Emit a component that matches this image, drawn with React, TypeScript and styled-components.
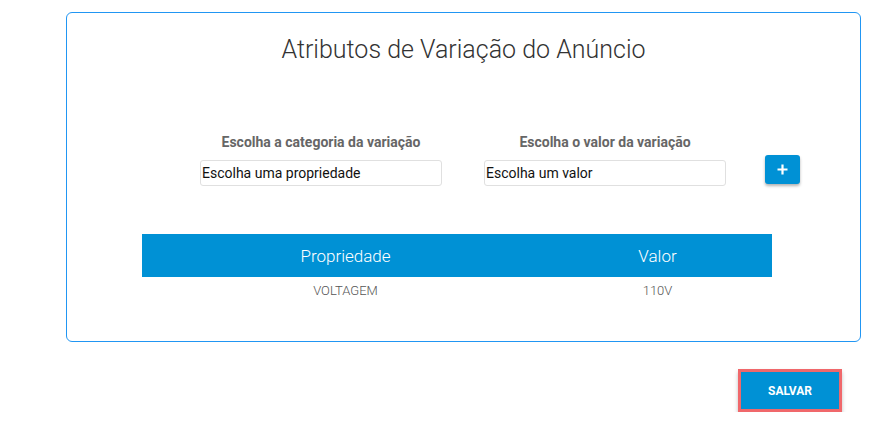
import React from "react";
import styled, { createGlobalStyle } from "styled-components";

const Global = createGlobalStyle`
  html, body { margin: 0; padding: 0; background: #fff; }
  body { font-family: Roboto, "Liberation Sans", Arial, sans-serif; }
  * { box-sizing: border-box; }
`;

const Page = styled.div`
  padding: 12px 0 0 66px;
`;

const Card = styled.section`
  width: 795px;
  height: 330px;
  border: 1px solid #2196f3;
  border-radius: 6px;
  display: flex;
  flex-direction: column;
`;

const Title = styled.h1`
  margin: 21px 0 0;
  text-align: center;
  font-family: Roboto, sans-serif;
  font-weight: 300;
  font-size: 25px;
  line-height: 31px;
  color: #333;
`;

const FormRow = styled.div`
  display: flex;
  align-items: flex-end;
  margin: 69px 0 0 133px;
`;

const Field = styled.div`
  display: flex;
  flex-direction: column;
  width: 242px;
  & + & {
    margin-left: 42px;
  }
`;

const Label = styled.label`
  font-family: Roboto, sans-serif;
  font-weight: 700;
  font-size: 14px;
  line-height: 16px;
  color: #666;
  text-align: center;
  margin-bottom: 10px;
`;

const Input = styled.input`
  width: 242px;
  height: 26px;
  border: 1px solid #e0e0e0;
  border-radius: 3px;
  padding: 1px 1px;
  font-family: Roboto, sans-serif;
  font-size: 14px;
  color: #111;
  background: #fff;
  outline: none;
  &::placeholder {
    color: #111;
    opacity: 1;
  }
`;

const AddButton = styled.button`
  width: 35px;
  height: 29px;
  margin: 0 0 2px 39px;
  border: none;
  border-radius: 3px;
  background: #0091d5;
  box-shadow: 0 2px 3px rgba(0, 0, 0, 0.3);
  display: flex;
  align-items: center;
  justify-content: center;
  padding: 0;
  cursor: pointer;
`;

const Table = styled.table`
  margin: 48px 0 0 75px;
  width: 630px;
  border-collapse: collapse;
  table-layout: fixed;
`;

const HeadCell = styled.th<{ $w?: number; $pr?: number }>`
  background: #0091d5;
  color: #fff;
  height: 43px;
  padding: 0 ${(p) => p.$pr ?? 0}px 0 0;
  font-family: Roboto, sans-serif;
  font-weight: 300;
  font-size: 17px;
  line-height: 20px;
  text-align: center;
  width: ${(p) => (p.$w ? `${p.$w}px` : "auto")};
`;

const Cell = styled.td<{ $pr?: number }>`
  padding: 6px ${(p) => p.$pr ?? 0}px 0 0;
  font-family: Roboto, sans-serif;
  font-weight: 300;
  font-size: 13px;
  line-height: 15px;
  color: #555;
  text-align: center;
`;

const Footer = styled.div`
  width: 795px;
  display: flex;
  justify-content: flex-end;
  padding-right: 19px;
  margin-top: 27px;
`;

const SaveButton = styled.button`
  width: 104px;
  height: 43px;
  border: 3px solid #f0686b;
  background: #0091d5;
  color: #fff;
  font-family: Roboto, sans-serif;
  font-weight: 700;
  font-size: 12px;
  box-shadow: 0 3px 4px rgba(0, 0, 0, 0.25);
  padding: 0;
  cursor: pointer;
`;

export default function App() {
  return (
    <>
      <Global />
      <Page>
        <Card>
          <Title>Atributos de Variação do Anúncio</Title>
          <FormRow>
            <Field>
              <Label>Escolha a categoria da variação</Label>
              <Input placeholder="Escolha uma propriedade" />
            </Field>
            <Field>
              <Label>Escolha o valor da variação</Label>
              <Input placeholder="Escolha um valor" />
            </Field>
            <AddButton aria-label="Adicionar">
              <svg width="11" height="11" viewBox="0 0 11 11">
                <path d="M5.5 0.5v10M0.5 5.5h10" stroke="#fff" strokeWidth="2.2" />
              </svg>
            </AddButton>
          </FormRow>
          <Table>
            <thead>
              <tr>
                <HeadCell $w={407}>Propriedade</HeadCell>
                <HeadCell $pr={6}>Valor</HeadCell>
              </tr>
            </thead>
            <tbody>
              <tr>
                <Cell>VOLTAGEM</Cell>
                <Cell $pr={6}>110V</Cell>
              </tr>
            </tbody>
          </Table>
        </Card>
        <Footer>
          <SaveButton>SALVAR</SaveButton>
        </Footer>
      </Page>
    </>
  );
}
